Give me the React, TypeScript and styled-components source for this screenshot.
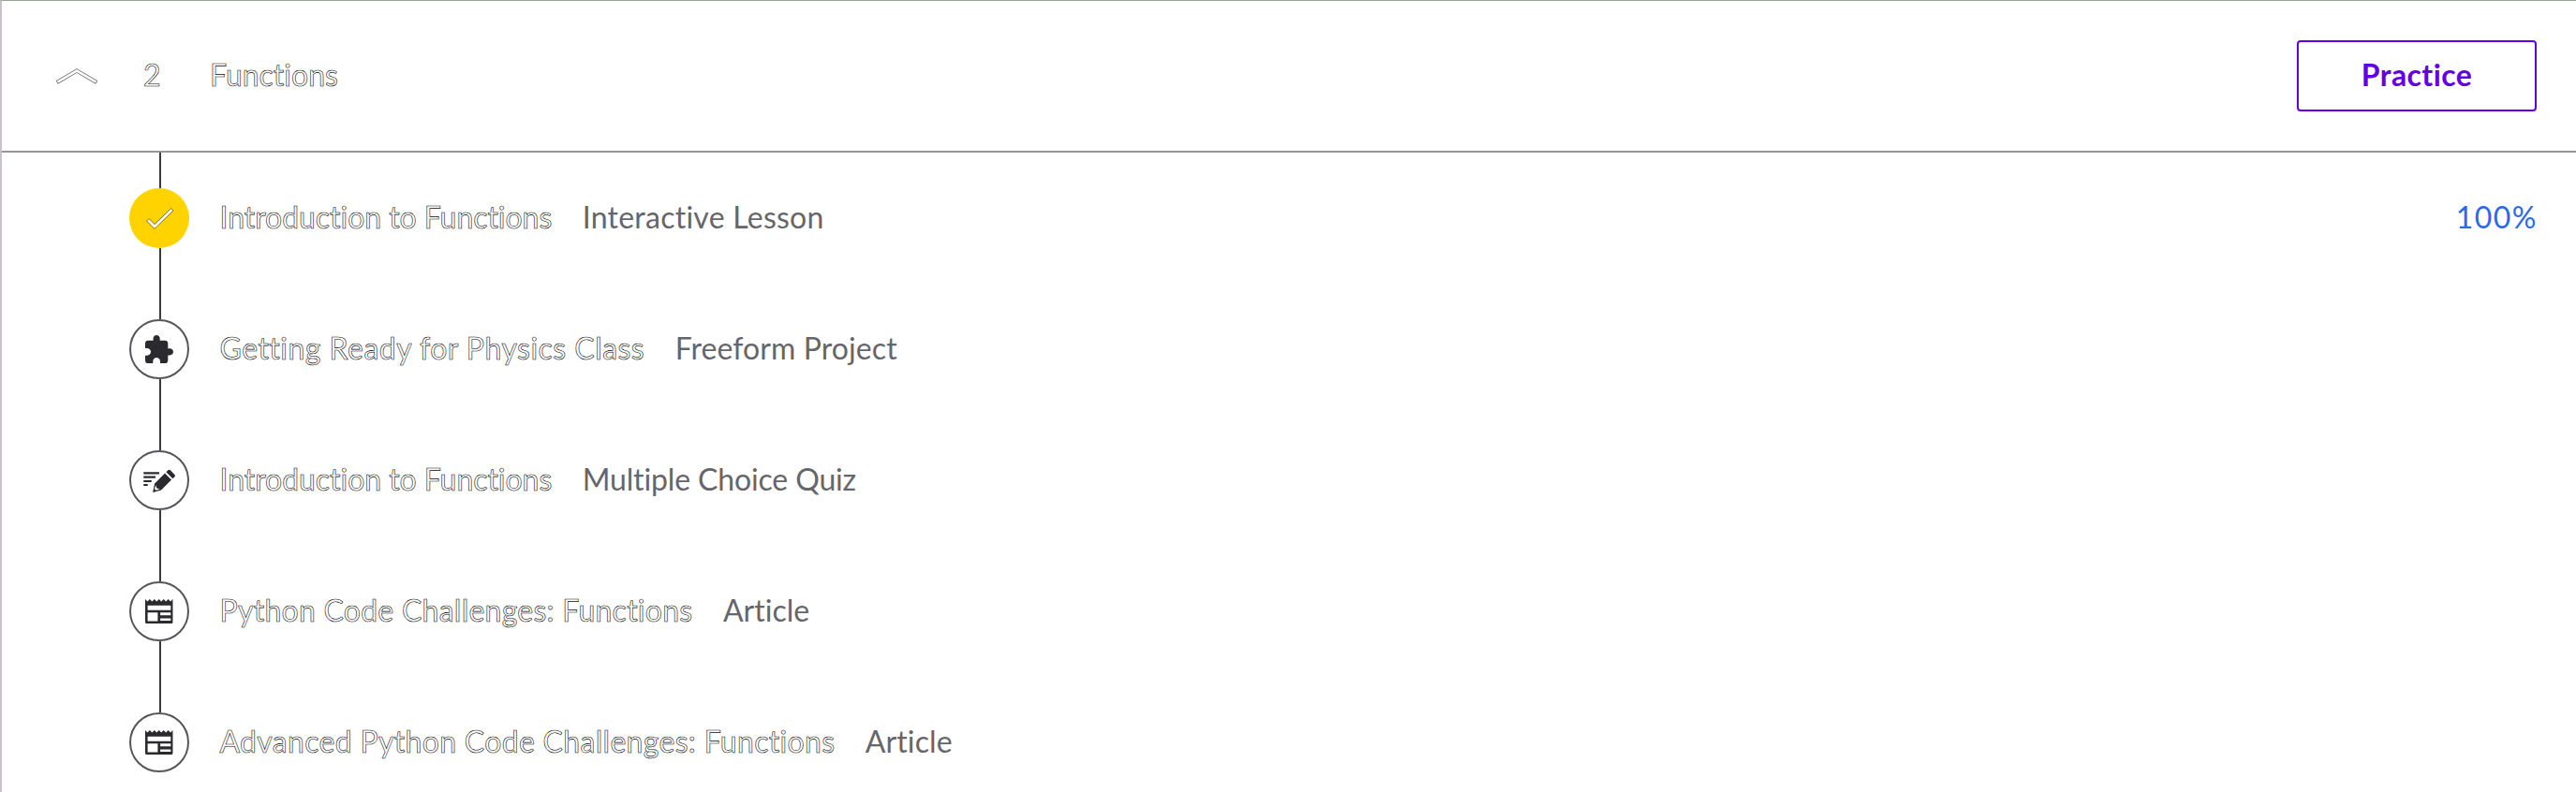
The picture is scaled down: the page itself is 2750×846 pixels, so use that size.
import React from 'react';
import styled, { createGlobalStyle } from 'styled-components';

const GlobalStyle = createGlobalStyle`
  * { box-sizing: border-box; }
  body {
    margin: 0;
    background: #fff;
    font-family: Lato, "Open Sans", sans-serif;
    font-size: 32px;
    line-height: 40px;
    font-variant-ligatures: none;
  }
`;

const Panel = styled.section`
  height: 846px;
  overflow: hidden;
  border-top: 1px solid #97a597;
  border-left: 2px solid #c6c2c8;
`;

const Header = styled.header`
  display: flex;
  align-items: center;
  height: 162px;
  padding: 0 42px 0 57px;
  border-bottom: 2px solid #949796;
`;

const Chevron = styled.svg`
  width: 48px;
  height: 24px;
`;

const OutlinedText = styled.span<{ $spacing: number }>`
  color: #fff;
  -webkit-text-stroke: 0.6px #0c0c10;
  letter-spacing: ${({ $spacing }) => $spacing}px;
  white-space: nowrap;
  padding-bottom: 3px;
`;

const ModuleNumber = styled(OutlinedText)`
  width: 71px;
  margin-left: 46px;
`;

const PracticeButton = styled.button`
  width: 256px;
  height: 76px;
  margin-left: auto;
  padding: 0 0 3px;
  border: 2px solid #6400e4;
  border-radius: 4px;
  background: #fff;
  color: #6400e4;
  font: 700 32px Lato, "Open Sans", sans-serif;
  letter-spacing: 0.4px;
`;

const LessonList = styled.ul`
  margin: 0;
  padding: 0;
  list-style: none;
`;

const LessonRow = styled.li`
  display: flex;
  align-items: center;
  height: 140px;
  padding: 0 41px 0 136px;
`;

const Marker = styled.div`
  display: flex;
  flex-direction: column;
  align-items: center;
  width: 64px;
  height: 140px;
  margin-right: 32.5px;
`;

const Connector = styled.div<{ $visible: boolean }>`
  flex: 1;
  width: 2px;
  margin-left: 2px;
  background: ${({ $visible }) => ($visible ? '#3c3a40' : 'transparent')};
`;

const Badge = styled.svg`
  display: block;
  width: 64px;
  height: 64px;
`;

const Kind = styled.span<{ $spacing: number }>`
  margin-left: 32.5px;
  padding-bottom: 3px;
  color: #66666a;
  letter-spacing: ${({ $spacing }) => $spacing}px;
  white-space: nowrap;
`;

const Progress = styled.span`
  margin-left: auto;
  padding-bottom: 3px;
  color: #2a68f0;
  letter-spacing: 1.5px;
`;

type IconName = 'done' | 'project' | 'quiz' | 'article';

const DoneIcon = () => (
  <g fill="none">
    <path d="M19.6 33.6 27 41 46 22.6" stroke="#5a4a00" strokeWidth="4" />
    <path d="M20 34 27 41 45.6 23" stroke="#fff" strokeWidth="2.9" />
  </g>
);

const ProjectIcon = () => (
  <path
    transform="translate(14.14 15.57) scale(1.4286)"
    d="M20.5 11H19V7c0-1.1-.9-2-2-2h-4V3.5C13 2.12 11.88 1 10.5 1S8 2.12 8 3.5V5H4c-1.1 0-1.99.9-1.99 2v3.8H3.5c1.49 0 2.7 1.21 2.7 2.7s-1.21 2.7-2.7 2.7H2V20c0 1.1.9 2 2 2h3.8v-1.5c0-1.49 1.21-2.7 2.7-2.7 1.49 0 2.7 1.21 2.7 2.7V22H17c1.1 0 2-.9 2-2v-4h1.5c1.38 0 2.5-1.12 2.5-2.5S21.88 11 20.5 11z"
  />
);

const QuizIcon = () => (
  <>
    <path d="M15.3 23.2H32v2.2H15.3zM15.3 27.6H28v2.2H15.3zM15.3 31.9h8.5V34h-8.5zM15.3 36h4.4v2.1h-4.4z" />
    <path d="m39.4 23.2 1.9-1.9q1.3-1.2 2.6 0l4.5 4.6q1.1 1.2 0 2.4l-2 2z" />
    <path d="m38 24.6 7 7-10.9 10.8-9 2.5 2-9.3z" />
    <path d="m28.2 37.2 1.2 3.2 3.2 1.2-4.1 1.2-1.5-1.5z" fill="#fff" />
  </>
);

const ArticleIcon = () => (
  <path
    fillRule="evenodd"
    d="M17 19l2.45 2.4 2.45-2.4 2.45 2.4 2.5-2.4 2.45 2.4 2.45-2.4 2.45 2.4 2.5-2.4 2.45 2.4 2.45-2.4 2.45 2.4 2.4-2.4v24.4q0 1.6-1.6 1.6H18.6q-1.6 0-1.6-1.6zM19.6 25.8v4.9h24.7v-4.9zM19.6 33.2v9.3h10.8v-9.3zM33.1 33.2v3h11.2v-3zM33.1 39.4v2.6h11.2v-2.6z"
  />
);

const icons: Record<IconName, React.FC> = {
  done: DoneIcon,
  project: ProjectIcon,
  quiz: QuizIcon,
  article: ArticleIcon,
};

interface Lesson {
  title: string;
  titleSpacing: number;
  kind: string;
  kindSpacing: number;
  icon: IconName;
  progress?: string;
}

const lessons: Lesson[] = [
  { title: 'Introduction to Functions', titleSpacing: -0.05, kind: 'Interactive Lesson', kindSpacing: 0.25, icon: 'done', progress: '100%' },
  { title: 'Getting Ready for Physics Class', titleSpacing: 0.47, kind: 'Freeform Project', kindSpacing: 0.08, icon: 'project' },
  { title: 'Introduction to Functions', titleSpacing: -0.05, kind: 'Multiple Choice Quiz', kindSpacing: -0.14, icon: 'quiz' },
  { title: 'Python Code Challenges: Functions', titleSpacing: 0.25, kind: 'Article', kindSpacing: 0.03, icon: 'article' },
  { title: 'Advanced Python Code Challenges: Functions', titleSpacing: 0.31, kind: 'Article', kindSpacing: 0.1, icon: 'article' },
];

export default function App() {
  return (
    <>
      <GlobalStyle />
      <Panel>
        <Header>
          <Chevron viewBox="0 0 48 24" fill="none">
            <path d="M1.8 19 23 6.6 44.2 19" stroke="#555" strokeWidth="4" />
            <path d="M2.4 18.7 23 6.6 43.6 18.7" stroke="#fff" strokeWidth="2.7" />
          </Chevron>
          <ModuleNumber $spacing={0}>2</ModuleNumber>
          <OutlinedText $spacing={0}>Functions</OutlinedText>
          <PracticeButton>Practice</PracticeButton>
        </Header>
        <LessonList>
          {lessons.map((lesson, index) => {
            const Icon = icons[lesson.icon];
            const done = lesson.icon === 'done';
            return (
              <LessonRow key={index}>
                <Marker>
                  <Connector $visible />
                  <Badge viewBox="0 0 64 64" fill="#2b2a2f">
                    {done ? (
                      <circle cx="32" cy="32" r="32" fill="#ffd300" />
                    ) : (
                      <circle cx="32" cy="32" r="31" fill="#fff" stroke="#57555a" strokeWidth="2" />
                    )}
                    <Icon />
                  </Badge>
                  <Connector $visible={index < lessons.length - 1} />
                </Marker>
                <OutlinedText $spacing={lesson.titleSpacing}>{lesson.title}</OutlinedText>
                <Kind $spacing={lesson.kindSpacing}>{lesson.kind}</Kind>
                {lesson.progress && <Progress>{lesson.progress}</Progress>}
              </LessonRow>
            );
          })}
        </LessonList>
      </Panel>
    </>
  );
}
